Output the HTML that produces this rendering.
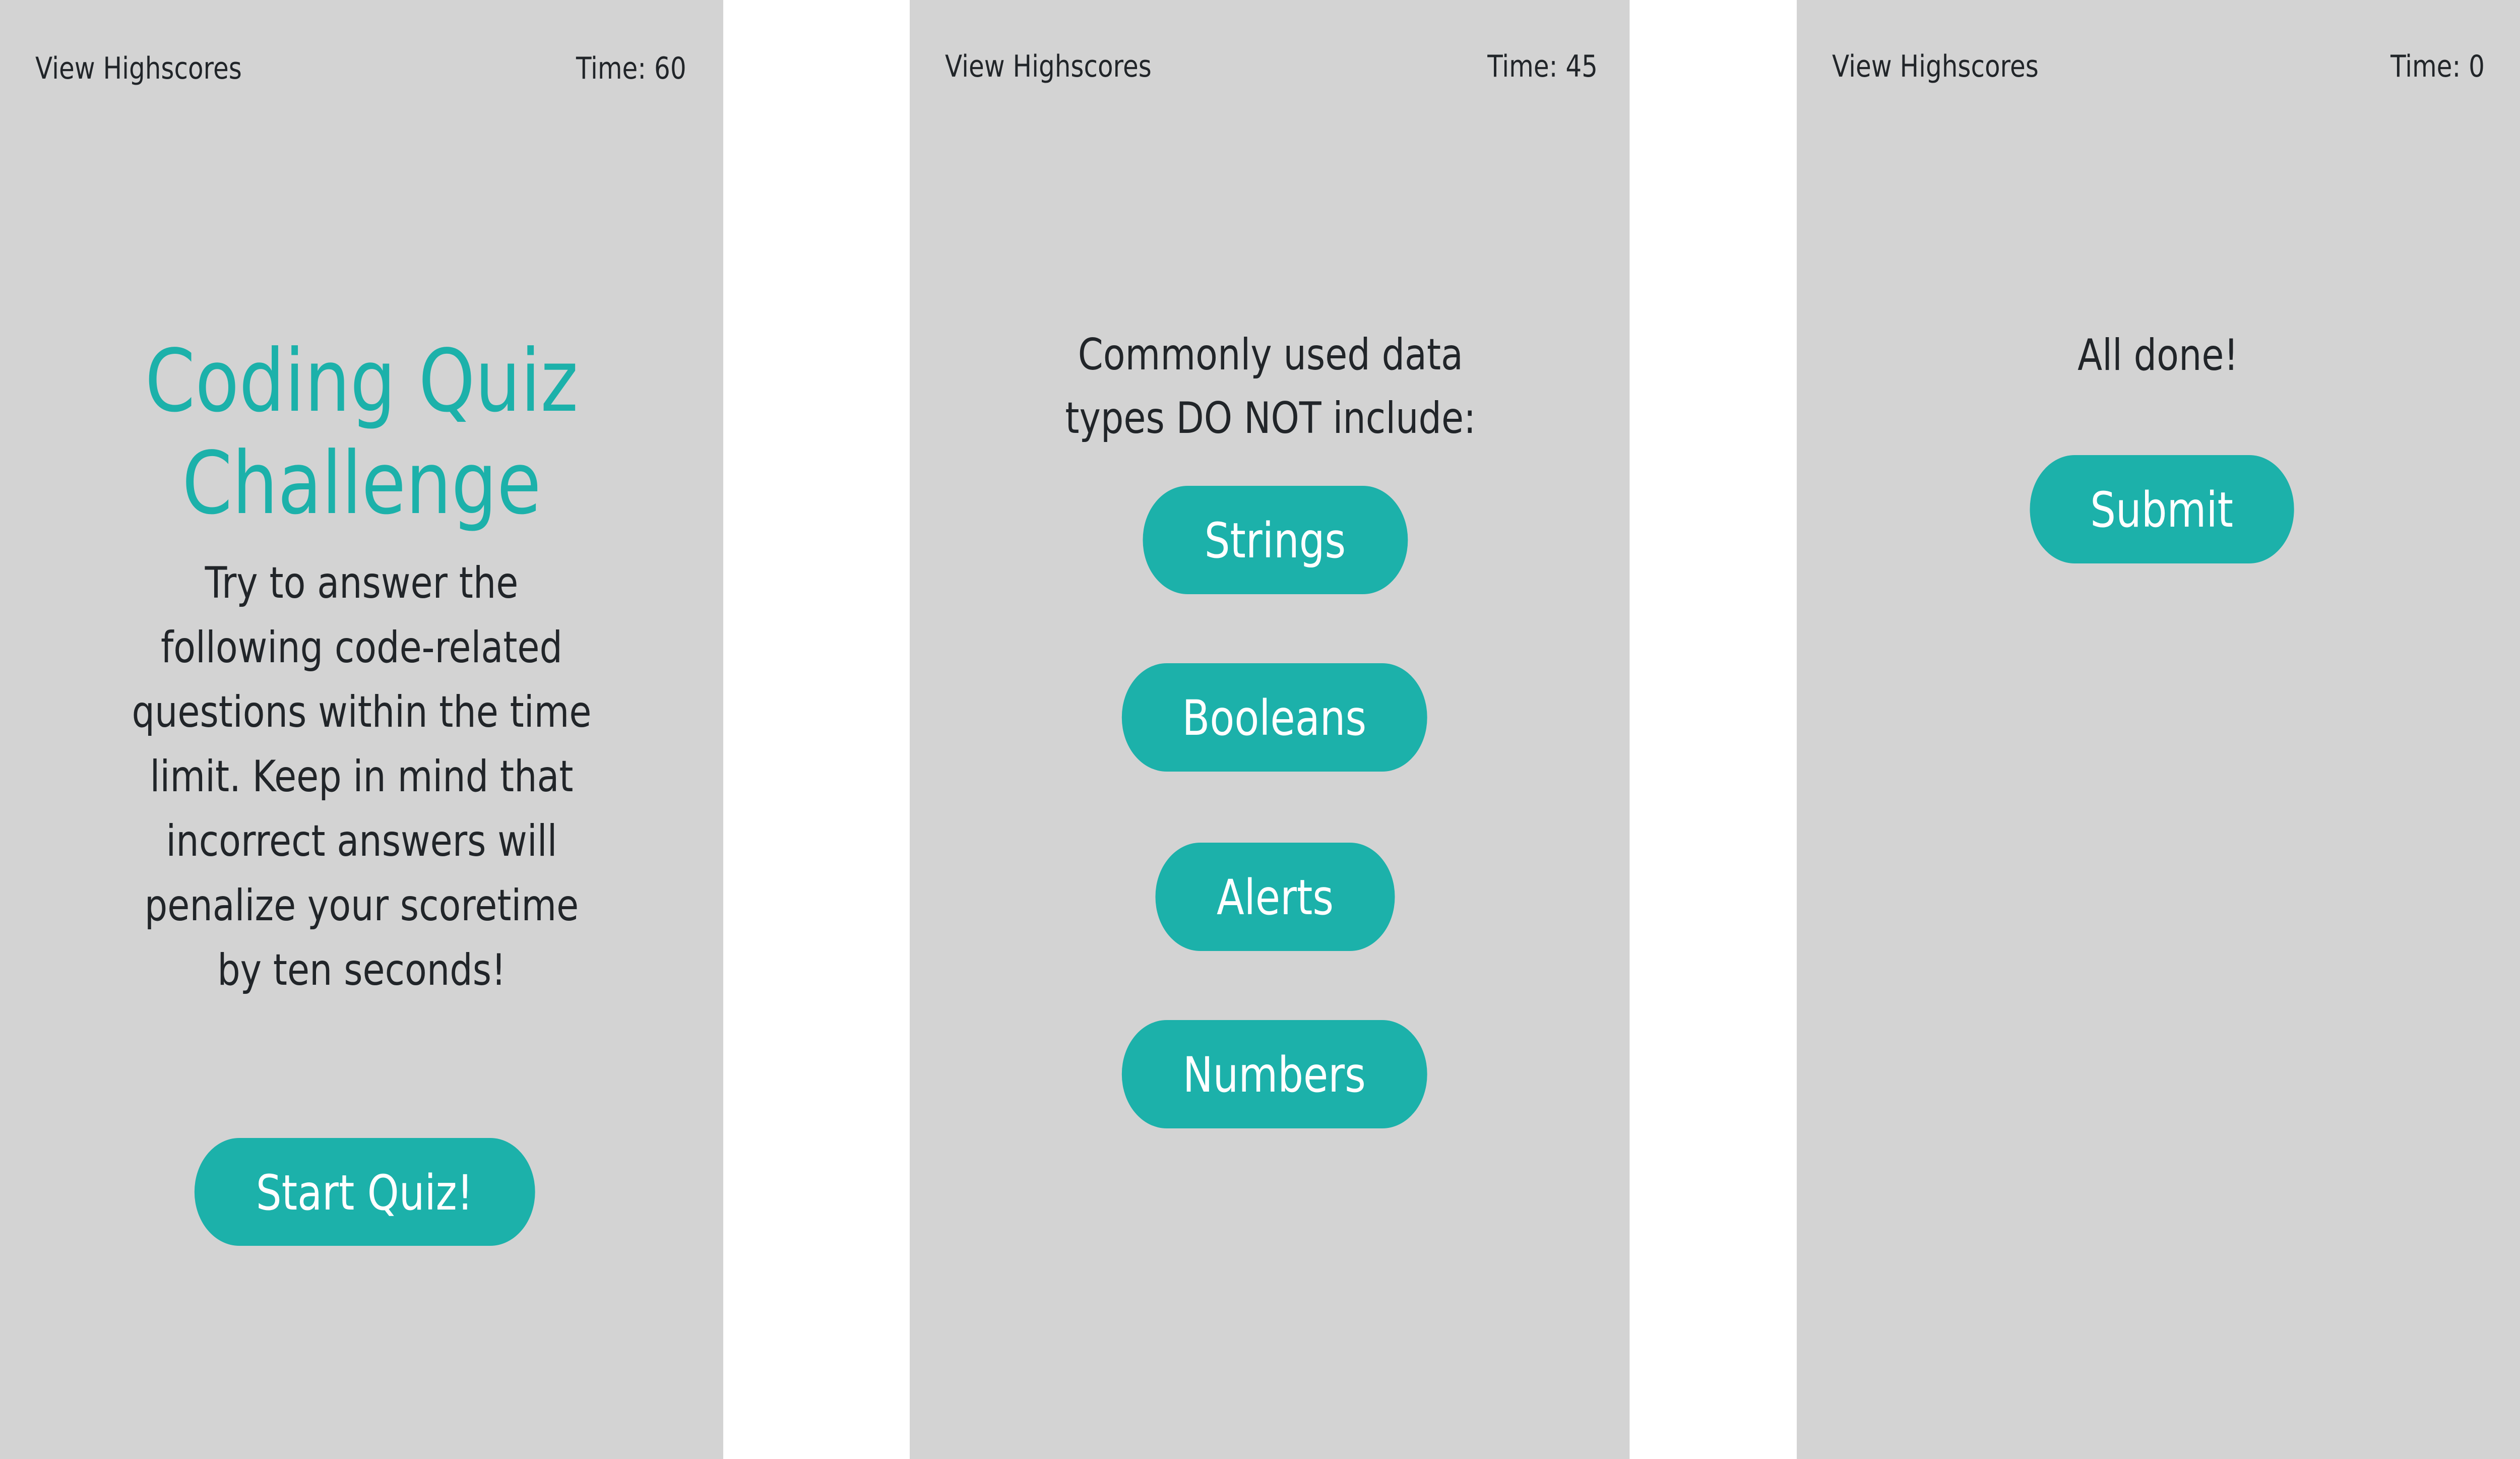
<!DOCTYPE html>
<html><head><meta charset="utf-8">
<style>
html,body{margin:0;padding:0;width:100%;height:100%;overflow:hidden;background:#fff;}
svg{display:block;width:100vw;height:100vh;}
text{font-family:"DejaVu Sans","Liberation Sans",sans-serif;}
.d{fill:#212529;}
.w{fill:#ffffff;font-size:96px;}
.h{font-size:60px;fill:#212529;}
</style></head><body>
<svg viewBox="0 0 6000 2895" preserveAspectRatio="none" xmlns="http://www.w3.org/2000/svg">
<rect x="0" y="0" width="6000" height="2895" fill="#ffffff"/>
<rect x="0" y="0" width="1722" height="2895" fill="#d3d3d3"/>
<rect x="2166" y="0" width="1714" height="2895" fill="#d3d3d3"/>
<rect x="4278" y="0" width="1722" height="2895" fill="#d3d3d3"/>

<text class="h" x="84" y="156">View Highscores</text>
<text class="h" x="1634" y="156" text-anchor="end">Time: 60</text>
<text class="h" x="2250" y="152">View Highscores</text>
<text class="h" x="3804" y="152" text-anchor="end">Time: 45</text>
<text class="h" x="4362" y="152">View Highscores</text>
<text class="h" x="5916" y="152" text-anchor="end">Time: 0</text>

<g text-anchor="middle">
<text x="861" y="815" font-size="171" fill="#1cb1aa">Coding Quiz</text>
<text x="861" y="1018" font-size="171" fill="#1cb1aa">Challenge</text>
<g class="d" font-size="86">
<text x="861" y="1186">Try to answer the</text>
<text x="861" y="1314">following code-related</text>
<text x="861" y="1442">questions within the time</text>
<text x="861" y="1570">limit. Keep in mind that</text>
<text x="861" y="1698">incorrect answers will</text>
<text x="861" y="1826">penalize your scoretime</text>
<text x="861" y="1954">by ten seconds!</text>
<text x="3025" y="733">Commonly used data</text>
<text x="3025" y="859">types DO NOT include:</text>
<text x="5138" y="734">All done!</text>
</g>

<rect x="463" y="2258" width="811" height="214" rx="107" fill="#1cb1aa"/>
<text class="w" x="868" y="2400">Start Quiz!</text>

<rect x="2721" y="964" width="631" height="215" rx="107" fill="#1cb1aa"/>
<text class="w" x="3036" y="1106">Strings</text>
<rect x="2671" y="1316" width="727" height="215" rx="107" fill="#1cb1aa"/>
<text class="w" x="3034" y="1458">Booleans</text>
<rect x="2751" y="1672" width="570" height="215" rx="107" fill="#1cb1aa"/>
<text class="w" x="3036" y="1814">Alerts</text>
<rect x="2671" y="2024" width="727" height="215" rx="107" fill="#1cb1aa"/>
<text class="w" x="3034" y="2166">Numbers</text>

<rect x="4833" y="903" width="629" height="215" rx="107" fill="#1cb1aa"/>
<text class="w" x="5147" y="1045">Submit</text>
</g>
</svg>
</body></html>
